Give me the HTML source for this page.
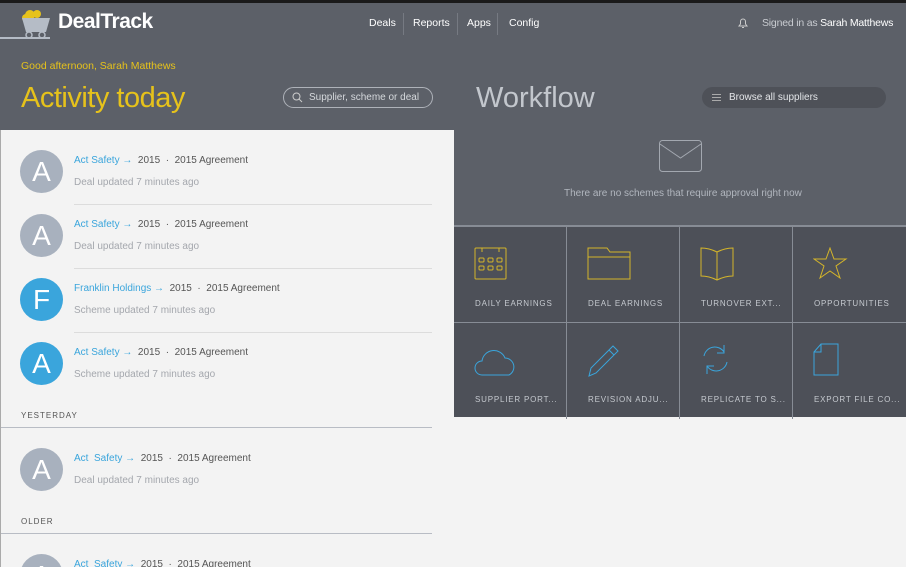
<!DOCTYPE html>
<html style="overflow:hidden"><head><style>
*{margin:0;padding:0;box-sizing:border-box}
html,body{width:906px;height:567px;overflow:hidden}
body{background:#5c6068;font-family:"Liberation Sans",sans-serif;position:relative}
.a{position:absolute}
.nav{top:17px;font-size:10.5px;color:#fff}
.sep{top:13px;width:1px;height:22px;background:#767a82}
.av{position:absolute;left:20px;width:43px;height:43px;border-radius:50%;background:#a8b1be;color:#fff;font-size:28px;text-align:center;line-height:43px;font-weight:300}
.av.b{background:#3aa5dc}
.t1{position:absolute;left:74px;font-size:10px;color:#555;white-space:nowrap}
.t1 b{color:#3aa5dc;font-weight:normal}
.t2{position:absolute;left:74px;font-size:10px;color:#a4a7ad}
.hr{position:absolute;left:74px;width:358px;height:1px;background:#dcdcdc}
.sec{position:absolute;left:21px;font-size:8px;letter-spacing:1px;color:#555}
.sl{position:absolute;left:0;width:432px;height:1px;background:#b8bcc4}
.tile{position:absolute;width:113px;height:96px;border-right:1px solid #878c95;border-bottom:1px solid #878c95}
.tile svg{position:absolute;left:20px;top:20px}
.tile span{position:absolute;left:21px;top:72px;font-size:8px;letter-spacing:0.8px;color:#c5c9cf;white-space:nowrap}
</style></head><body>
<div class="a" style="top:0;left:0;width:906px;height:3px;background:#1a1a1a"></div>
<svg class="a" style="left:0;top:5px" width="52" height="35" viewBox="0 0 52 35">
<circle cx="30" cy="10" r="5" fill="#e6c21b"/><circle cx="37" cy="9" r="4" fill="#e6c21b"/><circle cx="26" cy="13" r="4" fill="#e6c21b"/>
<path d="M22 13h28l-4 14H26z" fill="#b5bcc6"/><circle cx="29" cy="30" r="3" fill="none" stroke="#b5bcc6" stroke-width="1.5"/><circle cx="42" cy="30" r="3" fill="none" stroke="#b5bcc6" stroke-width="1.5"/>
<rect x="0" y="32" width="50" height="2" fill="#b5bcc6"/></svg>
<div class="a" style="left:58px;top:10px;font-size:21px;color:#fff;font-weight:bold;letter-spacing:-0.5px">DealTrack</div>
<div class="a nav" style="left:369px">Deals</div><div class="a sep" style="left:403px"></div>
<div class="a nav" style="left:413px">Reports</div><div class="a sep" style="left:457px"></div>
<div class="a nav" style="left:467px">Apps</div><div class="a sep" style="left:497px"></div>
<div class="a nav" style="left:509px">Config</div>
<svg class="a" style="left:737px;top:17px" width="12" height="12" viewBox="0 0 12 12"><path d="M2 9h8l-1.5-2V4.5a2.5 2.5 0 0 0-5 0V7zM5 10.5h2" fill="none" stroke="#ccc"/></svg>
<div class="a" style="left:762px;top:17px;font-size:10.5px;color:#c9ccd1;white-space:nowrap;letter-spacing:-0.2px">Signed in as <span style="color:#fff">Sarah Matthews</span></div>
<div class="a" style="left:21px;top:60px;font-size:10.5px;color:#e6c21b">Good afternoon, Sarah Matthews</div>
<div class="a" style="left:21px;top:82px;font-size:29px;color:#e6c21b;font-weight:300;letter-spacing:-0.5px">Activity today</div>
<div class="a" style="left:283px;top:87px;width:150px;height:21px;border:1px solid #aeb2b9;border-radius:11px;font-size:10px;color:#d5d8dc;padding:4px 0 0 25px;white-space:nowrap">Supplier, scheme or deal</div>
<svg class="a" style="left:292px;top:92px" width="11" height="11"><circle cx="4.5" cy="4.5" r="3.5" fill="none" stroke="#ccc"/><path d="M7 7l3 3" stroke="#ccc"/></svg>
<div class="a" style="left:476px;top:82px;font-size:29px;color:#c3c7cd;font-weight:300">Workflow</div>
<div class="a" style="left:702px;top:87px;width:184px;height:21px;background:#4e5158;border-radius:11px;font-size:10px;color:#e3e5e8;padding:5px 0 0 27px">Browse all suppliers</div>
<div class="a" style="left:712px;top:94px;width:9px;height:7px;border-top:1px solid #aaa;border-bottom:1px solid #aaa"></div><div class="a" style="left:712px;top:97px;width:9px;height:1px;background:#aaa"></div>
<svg class="a" style="left:659px;top:140px" width="44" height="34"><rect x="0.5" y="0.5" width="42" height="31" rx="3" fill="none" stroke="#a3a8b0"/><path d="M1 4l20.5 14L42 4" fill="none" stroke="#a3a8b0"/></svg>
<div class="a" style="left:564px;top:188px;font-size:10px;color:#b1b6be;white-space:nowrap">There are no schemes that require approval right now</div>
<div class="a" style="left:454px;top:225px;width:452px;height:192px;background:#4d5058;border-top:2px solid #878c95"></div>
<div class="a" style="left:454px;top:417px;width:452px;height:150px;background:#f3f3f3"></div>
<div class="tile" style="left:454px;top:227px"><svg width="34" height="34"><rect x="1" y="1" width="31" height="31" rx="1" fill="none" stroke="#d4b52a"/><path d="M8 1v4M25 1v4" stroke="#d4b52a"/><g fill="none" stroke="#d4b52a"><rect x="5" y="11" width="5" height="4" rx="1"/><rect x="14" y="11" width="5" height="4" rx="1"/><rect x="23" y="11" width="5" height="4" rx="1"/><rect x="5" y="19" width="5" height="4" rx="1"/><rect x="14" y="19" width="5" height="4" rx="1"/><rect x="23" y="19" width="5" height="4" rx="1"/></g></svg><span>DAILY EARNINGS</span></div>
<div class="tile" style="left:567px;top:227px"><svg width="46" height="34"><path d="M1 1h19l3 4h20v27H1z M1 10h42" fill="none" stroke="#d4b52a"/></svg><span>DEAL EARNINGS</span></div>
<div class="tile" style="left:680px;top:227px"><svg width="36" height="36"><path d="M1 1q8 0 16 4 8-4 16-4v28q-8 0-16 4-8-4-16-4z M17 5v28" fill="none" stroke="#d4b52a"/></svg><span>TURNOVER EXT...</span></div>
<div class="tile" style="left:793px;top:227px;border-right:none"><svg width="36" height="36"><path d="M17 1l4 11h12l-10 7 4 12-10-7-10 7 4-12-10-7h12z" fill="none" stroke="#d4b52a"/></svg><span>OPPORTUNITIES</span></div>
<div class="tile" style="left:454px;top:323px;border-bottom:none"><svg width="46" height="36"><path d="M8 32a7 7 0 0 1 0-14 12 12 0 0 1 23-3 9 9 0 0 1 4 17z" fill="none" stroke="#3aa5dc"/></svg><span>SUPPLIER PORT...</span></div>
<div class="tile" style="left:567px;top:323px;border-bottom:none"><svg width="36" height="36"><path d="M2 33l2-8L26 3l5 5L9 30z M22 7l5 5" fill="none" stroke="#3aa5dc"/></svg><span>REVISION ADJU...</span></div>
<div class="tile" style="left:680px;top:323px;border-bottom:none"><svg width="36" height="36"><path d="M4 13a11 11 0 0 1 20-4 M24 2v8h-7 M27 19a11 11 0 0 1-20 4 M7 31v-8h7" fill="none" stroke="#3aa5dc"/></svg><span>REPLICATE TO S...</span></div>
<div class="tile" style="left:793px;top:323px;border:none"><svg width="36" height="36"><path d="M8 1h17v31H1V9z M8 1v8H1" fill="none" stroke="#3aa5dc"/></svg><span>EXPORT FILE CO...</span></div>
<div class="a" style="left:0;top:130px;width:454px;height:437px;background:#f3f3f3;border-left:1px solid #aaa;overflow:hidden">
<div style="position:relative;left:-1px;top:-130px">
<div class="av" style="top:150px">A</div><div class="t1" style="top:155px"><b>Act Safety &#x2192;</b>&nbsp; 2015 &nbsp;·&nbsp; 2015 Agreement</div><div class="t2" style="top:177px">Deal updated 7 minutes ago</div><div class="hr" style="top:204px"></div>
<div class="av" style="top:214px">A</div><div class="t1" style="top:219px"><b>Act Safety &#x2192;</b>&nbsp; 2015 &nbsp;·&nbsp; 2015 Agreement</div><div class="t2" style="top:241px">Deal updated 7 minutes ago</div><div class="hr" style="top:268px"></div>
<div class="av b" style="top:278px">F</div><div class="t1" style="top:283px"><b>Franklin Holdings &#x2192;</b>&nbsp; 2015 &nbsp;·&nbsp; 2015 Agreement</div><div class="t2" style="top:305px">Scheme updated 7 minutes ago</div><div class="hr" style="top:332px"></div>
<div class="av b" style="top:342px">A</div><div class="t1" style="top:347px"><b>Act Safety &#x2192;</b>&nbsp; 2015 &nbsp;·&nbsp; 2015 Agreement</div><div class="t2" style="top:369px">Scheme updated 7 minutes ago</div>
<div class="sec" style="top:411px">YESTERDAY</div><div class="sl" style="top:427px"></div>
<div class="av" style="top:448px">A</div><div class="t1" style="top:453px"><b>Act&nbsp; Safety &#x2192;</b>&nbsp; 2015 &nbsp;·&nbsp; 2015 Agreement</div><div class="t2" style="top:475px">Deal updated 7 minutes ago</div>
<div class="sec" style="top:517px">OLDER</div><div class="sl" style="top:533px"></div>
<div class="av" style="top:554px">A</div><div class="t1" style="top:559px"><b>Act&nbsp; Safety &#x2192;</b>&nbsp; 2015 &nbsp;·&nbsp; 2015 Agreement</div>
</div></div>
</body></html>
